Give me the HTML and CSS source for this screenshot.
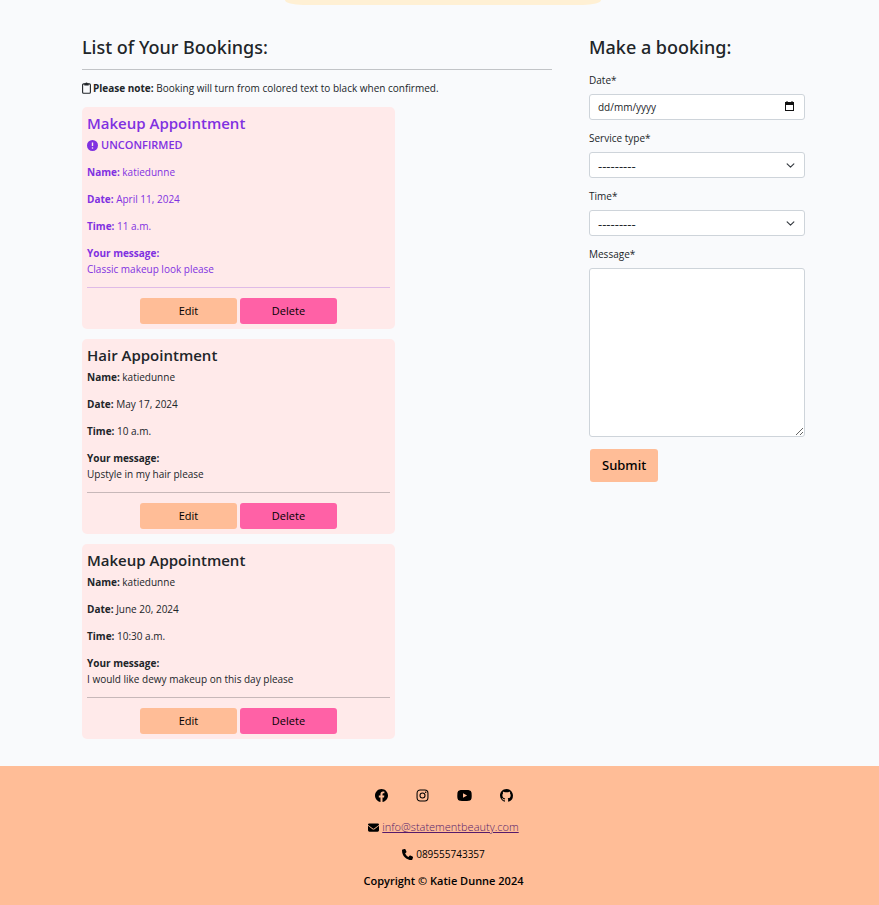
FILE: index.html
```
<!DOCTYPE html>
<html lang="en-GB">
<head>
<meta charset="utf-8">
<meta name="viewport" content="width=device-width, initial-scale=1">
<title>Your Bookings</title>
<link rel="stylesheet" href="styles.css">
</head>
<body>
<div class="banner-edge"></div>
<main class="page">
  <section class="bookings">
    <h1 class="section-title">List of Your Bookings:</h1>
    <hr class="rule">
    <p class="note"><svg class="icon-clip" viewBox="0 0 9 12" aria-hidden="true"><rect x=".6" y="1.9" width="7.8" height="9.4" rx="1" fill="none" stroke="currentColor" stroke-width="1.1"/><path d="M2.3 1.6h1.1a1.1 1.1 0 0 1 2.2 0h1.1v1.9H2.3z" fill="currentColor"/></svg><strong>Please note:</strong> Booking will turn from colored text to black when confirmed.</p>

    <article class="card card-pending">
      <h2 class="card-title">Makeup Appointment</h2>
      <p class="status"><svg class="icon-alert" viewBox="0 0 16 16" aria-hidden="true"><circle cx="8" cy="8" r="8" fill="currentColor"/><path d="M8 3.6v5.2" stroke="#ffeaea" stroke-width="2"/><circle cx="8" cy="11.6" r="1.2" fill="#ffeaea"/></svg>UNCONFIRMED</p>
      <p><strong>Name:</strong> katiedunne</p>
      <p><strong>Date:</strong> April 11, 2024</p>
      <p><strong>Time:</strong> 11 a.m.</p>
      <p><strong>Your message:</strong><br>Classic makeup look please</p>
      <hr class="rule">
      <div class="actions"><button class="btn btn-edit" type="button">Edit</button><button class="btn btn-delete" type="button">Delete</button></div>
    </article>

    <article class="card">
      <h2 class="card-title">Hair Appointment</h2>
      <p><strong>Name:</strong> katiedunne</p>
      <p><strong>Date:</strong> May 17, 2024</p>
      <p><strong>Time:</strong> 10 a.m.</p>
      <p><strong>Your message:</strong><br>Upstyle in my hair please</p>
      <hr class="rule">
      <div class="actions"><button class="btn btn-edit" type="button">Edit</button><button class="btn btn-delete" type="button">Delete</button></div>
    </article>

    <article class="card">
      <h2 class="card-title">Makeup Appointment</h2>
      <p><strong>Name:</strong> katiedunne</p>
      <p><strong>Date:</strong> June 20, 2024</p>
      <p><strong>Time:</strong> 10:30 a.m.</p>
      <p><strong>Your message:</strong><br>I would like dewy makeup on this day please</p>
      <hr class="rule">
      <div class="actions"><button class="btn btn-edit" type="button">Edit</button><button class="btn btn-delete" type="button">Delete</button></div>
    </article>
  </section>

  <section class="booking-form">
    <h1 class="section-title">Make a booking:</h1>
    <form>
      <label for="date">Date*</label>
      <div class="date-field">
        <input class="control" id="date" type="text" placeholder="dd/mm/yyyy">
        <svg class="icon-calendar" viewBox="0 0 9 10" aria-hidden="true"><path d="M0 1h9v9H0zM1 4v5h7V4z" fill="#111" fill-rule="evenodd"/><path d="M1.5 0h1v1h-1zM6.5 0h1v1h-1z" fill="#111"/></svg>
      </div>
      <label for="service">Service type*</label>
      <select class="control" id="service"><option>---------</option></select>
      <label for="time">Time*</label>
      <select class="control" id="time"><option>---------</option></select>
      <label for="message">Message*</label>
      <textarea class="control message" id="message"></textarea>
      <button class="btn btn-submit" type="submit">Submit</button>
    </form>
  </section>
</main>

<footer class="footer">
  <nav class="social" aria-label="Social media">
    <a href="#" aria-label="Facebook"><svg viewBox="0 0 16 16"><path d="M16 8.05C16 3.6 12.42 0 8 0S0 3.6 0 8.05c0 4.02 2.93 7.35 6.75 7.95v-5.62H4.72V8.05h2.03V6.28c0-2.02 1.2-3.13 3.02-3.13.88 0 1.79.16 1.79.16v1.98h-1.01c-.99 0-1.3.62-1.3 1.26v1.5h2.22l-.36 2.33H9.25V16C13.07 15.4 16 12.07 16 8.05z" fill="currentColor"/></svg></a>
    <a href="#" aria-label="Instagram"><svg viewBox="0 0 16 16"><g fill="none" stroke="currentColor" stroke-width="1.3"><rect x="1.3" y="1.3" width="13.4" height="13.4" rx="3.8"/><circle cx="8" cy="8" r="3.1"/></g><circle cx="11.9" cy="4.1" r=".95" fill="currentColor"/></svg></a>
    <a href="#" aria-label="YouTube"><svg class="wide" viewBox="0 0 16 14"><path d="M3 1.4c2-.3 8-.3 10 0q2.300.3 2.600 2.600.3 3 0 6-.3 2.300-2.600 2.600c-2 .3-8 .3-10 0Q.7 12.300.4 10q-.3-3 0-6Q.7 1.700 3 1.400zM6.400 4.500v5L10.800 7z" fill="currentColor" fill-rule="evenodd"/></svg></a>
    <a href="#" aria-label="GitHub"><svg viewBox="0 0 16 16"><path d="M8 0C3.58 0 0 3.58 0 8c0 3.54 2.29 6.53 5.47 7.59.4.07.55-.17.55-.38 0-.19-.01-.82-.01-1.49-2.01.37-2.53-.49-2.69-.94-.09-.23-.48-.94-.82-1.13-.28-.15-.68-.52-.01-.53.63-.01 1.08.58 1.23.82.72 1.21 1.87.87 2.33.66.07-.52.28-.87.51-1.07-1.78-.2-3.64-.89-3.64-3.95 0-.87.31-1.59.82-2.15-.08-.2-.36-1.02.08-2.12 0 0 .67-.21 2.2.82.64-.18 1.32-.27 2-.27s1.36.09 2 .27c1.53-1.04 2.2-.82 2.2-.82.44 1.1.16 1.92.08 2.12.51.56.82 1.27.82 2.15 0 3.07-1.87 3.75-3.65 3.95.29.25.54.73.54 1.48 0 1.07-.01 1.93-.01 2.2 0 .21.15.46.55.38A8.01 8.01 0 0 0 16 8c0-4.42-3.58-8-8-8z" fill="currentColor"/></svg></a>
  </nav>
  <p class="contact"><svg class="icon-contact" viewBox="0 0 16 16" aria-hidden="true"><path d="M1.500 2h13A1.500 1.500 0 0 1 15.400 4.700L8.900 9.500a1.500 1.500 0 0 1-1.800 0L.6 4.700A1.500 1.500 0 0 1 1.500 2zM0 5.500l6.500 4.900a2.500 2.500 0 0 0 3 0L16 5.500V12a2 2 0 0 1-2 2H2a2 2 0 0 1-2-2z" fill="currentColor"/></svg><a class="mail" href="mailto:info@statementbeauty.com">info@statementbeauty.com</a></p>
  <p class="contact"><svg class="icon-contact" viewBox="0 0 16 16" aria-hidden="true"><path d="M5.150.77A1.250 1.250 0 0 0 3.670.04L.920.790A1.250 1.250 0 0 0 0 2c0 7.730 6.270 14 14 14 .56 0 1.060-.380 1.210-.920l.750-2.750a1.250 1.250 0 0 0-.730-1.480l-3-1.250a1.250 1.250 0 0 0-1.450.360L9.520 11.500A10.560 10.560 0 0 1 4.500 6.480l1.540-1.260c.43-.350.580-.940.360-1.450z" fill="currentColor"/></svg>089555743357</p>
  <p class="copyright">Copyright © Katie Dunne 2024</p>
</footer>
</body>
</html>
```
FILE: styles.css
```
* { box-sizing: border-box; }

body {
  margin: 0;
  min-height: 100vh;
  display: flex;
  flex-direction: column;
  background: #f9fafc;
  color: #212529;
  font: 400 10px/16px "Open Sans", "Noto Sans", sans-serif;
}

h1, h2, p { margin: 0; }
strong { font-weight: 700; }
svg { display: inline-block; }

.banner-edge {
  width: 36%;
  height: 5px;
  margin-left: 285px;
  background: #fff0d4;
  border-radius: 0 0 18px 18px / 0 0 5px 5px;
}

.page {
  display: grid;
  grid-template-columns: 470fr 216fr;
  gap: 37px;
  padding: 30px 74px 27px 82px;
}

.section-title {
  font-family: "Noto Sans", "Open Sans", sans-serif;
  font-size: 18px;
  line-height: 24px;
  font-weight: 500;
}

.rule {
  height: 1px;
  margin: 0;
  border: 0;
  background: currentColor;
  color: inherit;
  opacity: .25;
}

.bookings > .rule { margin: 10px 0; }

.icon-clip {
  width: 9px;
  height: 12px;
  margin-right: 2px;
  vertical-align: -2px;
}

.card {
  width: 66.6%;
  margin-top: 10px;
  padding: 6px 5px 5px;
  border-radius: 5px;
  background: #ffeaea;
}

.note + .card { margin-top: 11px; }

.card-pending { color: #7f31e1; }

.card-title {
  margin-bottom: 4px;
  font-size: 15px;
  line-height: 20px;
  font-weight: 600;
}

.card p + p { margin-top: 11px; }
.card .rule { margin: 10px 0; }

.status {
  font-size: 11px;
  font-weight: 600;
}

.icon-alert {
  width: 11px;
  height: 11px;
  margin-right: 3px;
  vertical-align: -2px;
}

.actions {
  display: flex;
  justify-content: center;
  gap: 3px;
}

.btn {
  padding: 0;
  border: 0;
  border-radius: 3px;
  color: #000;
  font: 400 11px/16px "Open Sans", "Noto Sans", sans-serif;
  cursor: pointer;
}

.actions .btn {
  width: 32%;
  height: 26px;
}

.btn-edit, .btn-submit { background: #ffbd97; }
.btn-delete { background: #ff61a6; }

.booking-form label {
  display: block;
  margin-bottom: 6px;
}

.booking-form .section-title { margin-bottom: 13px; }

.control {
  display: block;
  width: 100%;
  height: 26px;
  margin: 0 0 10px;
  padding: 0 8px;
  border: 1px solid #ced4da;
  border-radius: 3px;
  background: #fff;
  color: #212529;
  font: inherit;
}

.control::placeholder {
  color: #212529;
  opacity: 1;
}

select.control {
  appearance: none;
  padding-top: 2px;
  background: #fff url("data:image/svg+xml,%3Csvg xmlns='http://www.w3.org/2000/svg' viewBox='0 0 16 16'%3E%3Cpath fill='none' stroke='%23343a40' stroke-linecap='round' stroke-linejoin='round' stroke-width='2' d='m2 5 6 6 6-6'/%3E%3C/svg%3E") no-repeat right 9px center / 9px 9px;
  font-size: 13px;
}

.message {
  height: 169px;
  margin-bottom: 12px;
  resize: vertical;
}

.date-field { position: relative; }

.icon-calendar {
  position: absolute;
  top: 7px;
  right: 11px;
  width: 9px;
  height: 10px;
}

.btn-submit {
  margin-left: 1px;
  padding: 0 12px;
  font-family: "Noto Sans", "Open Sans", sans-serif;
  font-size: 13px;
  font-weight: 500;
  line-height: 33px;
}

.footer {
  flex: 1;
  padding: 22px 0 14px 8px;
  background: #ffbd97;
  color: #000;
  text-align: center;
}

.social {
  display: flex;
  justify-content: center;
  gap: 28px;
  margin-bottom: 17px;
}

.social a {
  display: flex;
  align-items: center;
  height: 14px;
  color: #000;
}

.social svg {
  width: 13px;
  height: 13px;
}

.social .wide { width: 15px; }

.contact { margin-bottom: 11px; }

.icon-contact {
  width: 11px;
  height: 11px;
  margin-right: 3px;
  vertical-align: -2px;
}

.mail {
  color: #551a6b;
  font-size: 11px;
  font-weight: 300;
}

.copyright {
  font-size: 11px;
  font-weight: 600;
}
```
